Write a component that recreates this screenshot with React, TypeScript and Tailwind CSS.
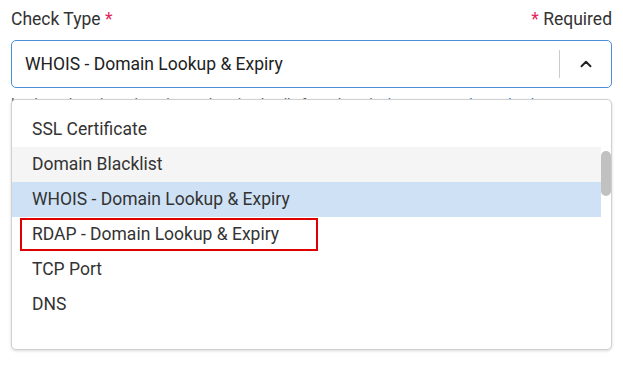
import { ChevronUp } from "lucide-react";

const options = [
  "SSL Certificate",
  "Domain Blacklist",
  "WHOIS - Domain Lookup & Expiry",
  "RDAP - Domain Lookup & Expiry",
  "TCP Port",
  "DNS",
];

export default function App() {
  const selected = "WHOIS - Domain Lookup & Expiry";

  return (
    <main className="w-[623px] h-[365px] bg-white px-[11px] pt-[5px] font-['Roboto',sans-serif] text-[#333]">
      <div className="flex items-center justify-between h-[28px] text-[17.5px]">
        <label>
          Check Type <span className="text-[#e0245e]">*</span>
        </label>
        <span>
          <span className="text-[#e0245e]">*</span> Required
        </span>
      </div>

      <div className="relative mt-[7px]">
        <div className="flex items-center h-[48px] border border-[#4a90d9] rounded-[5px] bg-white">
          <span className="flex-1 pl-[13px] text-[17.5px] text-[#222]">{selected}</span>
          <span className="w-px h-[28px] bg-[#ccc]" />
          <span className="w-[51px] flex items-center justify-center text-[#222]">
            <ChevronUp size={18} strokeWidth={2.5} />
          </span>
        </div>

        <p className="mt-[6px] text-[14px] leading-[20px] text-[#555] whitespace-nowrap overflow-hidden">
          Look up domain registration and expiry details for a domain.{" "}
          <span className="text-[#1a73e8]">Learn more about check types</span>
        </p>

        <div className="absolute left-0 right-0 top-[59px] h-[251px] bg-white border border-[#d0d0d0] rounded-[5px] shadow-[0_1px_3px_rgba(0,0,0,0.15)] flex">
          <ul className="flex-1 pt-[12px] text-[17.5px] text-[#333]">
            {options.map((opt) => {
              const isSelected = opt === selected;
              const isHover = opt === "Domain Blacklist";
              const isMarked = opt.startsWith("RDAP");
              return (
                <li
                  key={opt}
                  className={`relative h-[35px] flex items-center px-[20px] ${
                    isSelected ? "bg-[#cfe2f5]" : isHover ? "bg-[#f5f5f5]" : ""
                  }`}
                >
                  {opt}
                  {isMarked && (
                    <span className="absolute left-[8px] top-[1px] w-[298px] h-[33px] border-2 border-[#e00000]" />
                  )}
                </li>
              );
            })}
          </ul>
          <div className="w-[10px] pt-[51px]">
            <div className="h-[45px] rounded-full bg-[#c1c1c1]" />
          </div>
        </div>
      </div>
    </main>
  );
}
